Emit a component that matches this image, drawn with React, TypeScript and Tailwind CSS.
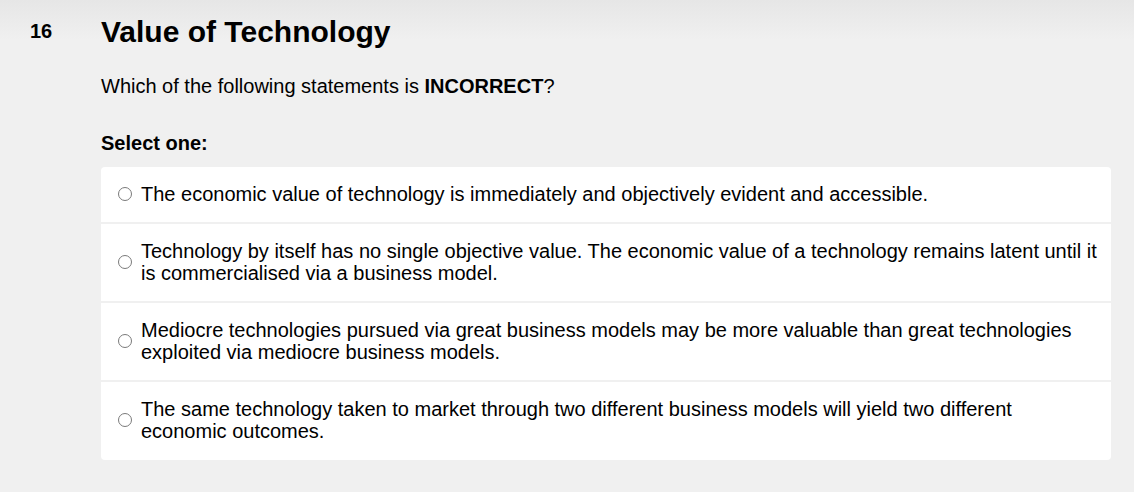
import React from 'react';

const options = [
  'The economic value of technology is immediately and objectively evident and accessible.',
  'Technology by itself has no single objective value. The economic value of a technology remains latent until it is commercialised via a business model.',
  'Mediocre technologies pursued via great business models may be more valuable than great technologies exploited via mediocre business models.',
  'The same technology taken to market through two different business models will yield two different economic outcomes.',
];

export default function App() {
  return (
    <div
      className="min-h-[492px] w-full bg-[#f0f0f0] bg-[linear-gradient(to_bottom,#e6e6e6_0px,#f0f0f0_40px)] text-black"
      style={{ fontFamily: '"Liberation Sans", Arial, sans-serif' }}
    >
      <div className="flex pt-[14px]">
        {/* Question number */}
        <div className="w-[101px] shrink-0 pl-[30px] pt-[3px] text-[20px] font-bold leading-[28px]">16</div>

        {/* Question body */}
        <div className="w-[1010px] flex flex-col">
          <h1 className="text-[30px] font-bold leading-[36px]">Value of Technology</h1>
          <p className="mt-[24px] text-[20px] leading-[24px]">
            Which of the following statements is <span className="font-bold">INCORRECT</span>?
          </p>
          <p className="mt-[34px] text-[20px] font-bold leading-[22px]">Select one:</p>

          <div className="mt-[13px] flex flex-col gap-[2px] rounded-[4px] bg-[#f0f0f0] overflow-hidden">
            {options.map((opt, i) => (
              <label
                key={i}
                className="flex items-center gap-[9px] bg-white pl-[17px] pr-[12px] pt-4 pb-[17px] last:pb-[18px] text-[20px] leading-[22px]"
              >
                <span className="w-[14px] h-[14px] shrink-0 rounded-full border border-[#7a7a7a] bg-white" />
                <span>{opt}</span>
              </label>
            ))}
          </div>
        </div>
      </div>
    </div>
  );
}
